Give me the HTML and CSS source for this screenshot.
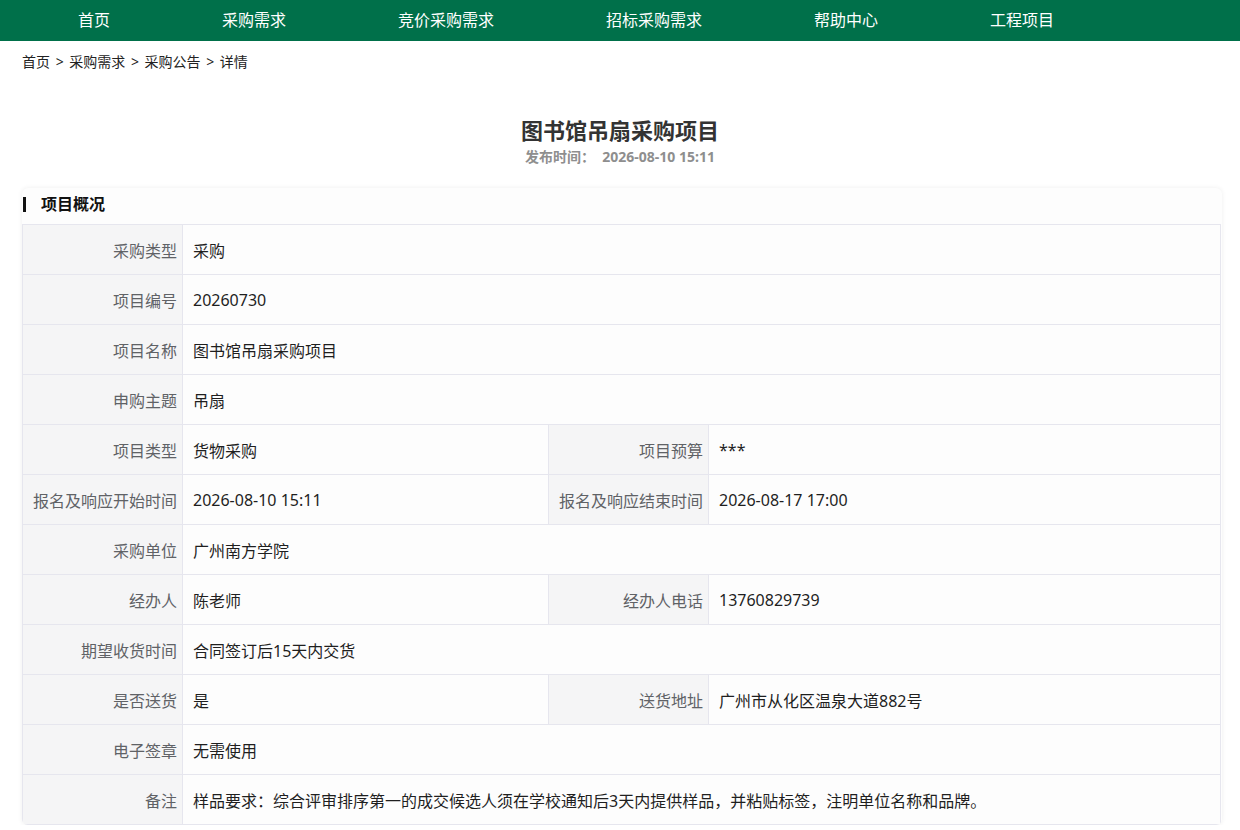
FILE: index.html
```html
<!DOCTYPE html>
<html lang="zh-CN">
<head>
<meta charset="utf-8">
<title>图书馆吊扇采购项目</title>
<link rel="stylesheet" href="styles.css">
</head>
<body>
<header class="nav">
  <a class="nav-item">首页</a>
  <a class="nav-item">采购需求</a>
  <a class="nav-item">竞价采购需求</a>
  <a class="nav-item">招标采购需求</a>
  <a class="nav-item">帮助中心</a>
  <a class="nav-item">工程项目</a>
</header>
<div class="crumbs">首页 &gt; 采购需求 &gt; 采购公告 &gt; 详情</div>
<div class="head">
  <h1 class="title">图书馆吊扇采购项目</h1>
  <div class="pubtime">发布时间：&nbsp; 2026-08-10 15:11</div>
</div>
<section class="card">
  <div class="card-head"><span class="bar"></span><span class="card-title">项目概况</span></div>
  <table class="info">
    <colgroup><col class="c-label"><col class="c-val1"><col class="c-label"><col></colgroup>
    <tr><th>采购类型</th><td colspan="3">采购</td></tr>
    <tr><th>项目编号</th><td colspan="3">20260730</td></tr>
    <tr><th>项目名称</th><td colspan="3">图书馆吊扇采购项目</td></tr>
    <tr><th>申购主题</th><td colspan="3">吊扇</td></tr>
    <tr><th>项目类型</th><td>货物采购</td><th>项目预算</th><td>***</td></tr>
    <tr><th>报名及响应开始时间</th><td>2026-08-10 15:11</td><th>报名及响应结束时间</th><td>2026-08-17 17:00</td></tr>
    <tr><th>采购单位</th><td colspan="3">广州南方学院</td></tr>
    <tr><th>经办人</th><td>陈老师</td><th>经办人电话</th><td>13760829739</td></tr>
    <tr><th>期望收货时间</th><td colspan="3">合同签订后15天内交货</td></tr>
    <tr><th>是否送货</th><td>是</td><th>送货地址</th><td>广州市从化区温泉大道882号</td></tr>
    <tr><th>电子签章</th><td colspan="3">无需使用</td></tr>
    <tr><th>备注</th><td colspan="3">样品要求：综合评审排序第一的成交候选人须在学校通知后3天内提供样品，并粘贴标签，注明单位名称和品牌。</td></tr>
  </table>
</section>
</body>
</html>
```

FILE: styles.css
```css
* { box-sizing: border-box; }
html, body { margin: 0; padding: 0; background: #fff; }
body {
  font-family: "Noto Sans", "Noto Sans CJK SC", sans-serif;
  color: #303133;
  width: 1240px;
}
.nav {
  height: 41px;
  background: #00704a;
  display: flex;
  align-items: center;
  padding-left: 78px;
  gap: 112px;
}
.nav-item {
  color: #fff;
  font-size: 16px;
  line-height: 41px;
  white-space: nowrap;
}
.crumbs {
  font-size: 14px;
  word-spacing: 2px;
  color: #222;
  padding: 11px 0 0 22px;
  line-height: 20px;
  height: 31px;
}
.head {
  text-align: center;
  padding-top: 43px;
}
.title {
  margin: 0;
  font-size: 22px;
  font-weight: bold;
  color: #333;
  line-height: 30px;
}
.pubtime {
  font-size: 14px;
  font-weight: bold;
  color: #8e8e8e;
  line-height: 20px;
  margin-top: 2px;
}
.card {
  margin: 21px 0 0 22px;
  width: 1200px;
  background: #fdfdfd;
  border-radius: 6px;
  box-shadow: 0 0 5px rgba(0, 0, 0, 0.07);
  overflow: hidden;
}
.card-head {
  height: 36px;
  padding-bottom: 6px;
  display: flex;
  align-items: center;
}
.bar {
  width: 3px;
  height: 15px;
  background: #111;
  margin-left: 1px;
  margin-top: 2px;
}
.card-title {
  margin-left: 15px;
  font-size: 16px;
  font-weight: bold;
  color: #111;
}
.info {
  width: 1199px;
  border-collapse: collapse;
  table-layout: fixed;
  font-size: 16px;
}
.c-label { width: 160px; }
.c-val1 { width: 366px; }
.info th, .info td {
  height: 50px;
  border: 1px solid #e6e6ee;
  padding: 0;
  vertical-align: middle;
}
.info th {
  background: #f5f5f6;
  color: #606266;
  font-weight: normal;
  text-align: right;
  padding-right: 5px;
  white-space: nowrap;
}
.info td {
  background: #fdfdfd;
  color: #1f1f1f;
  text-align: left;
  padding-left: 10px;
}
```
